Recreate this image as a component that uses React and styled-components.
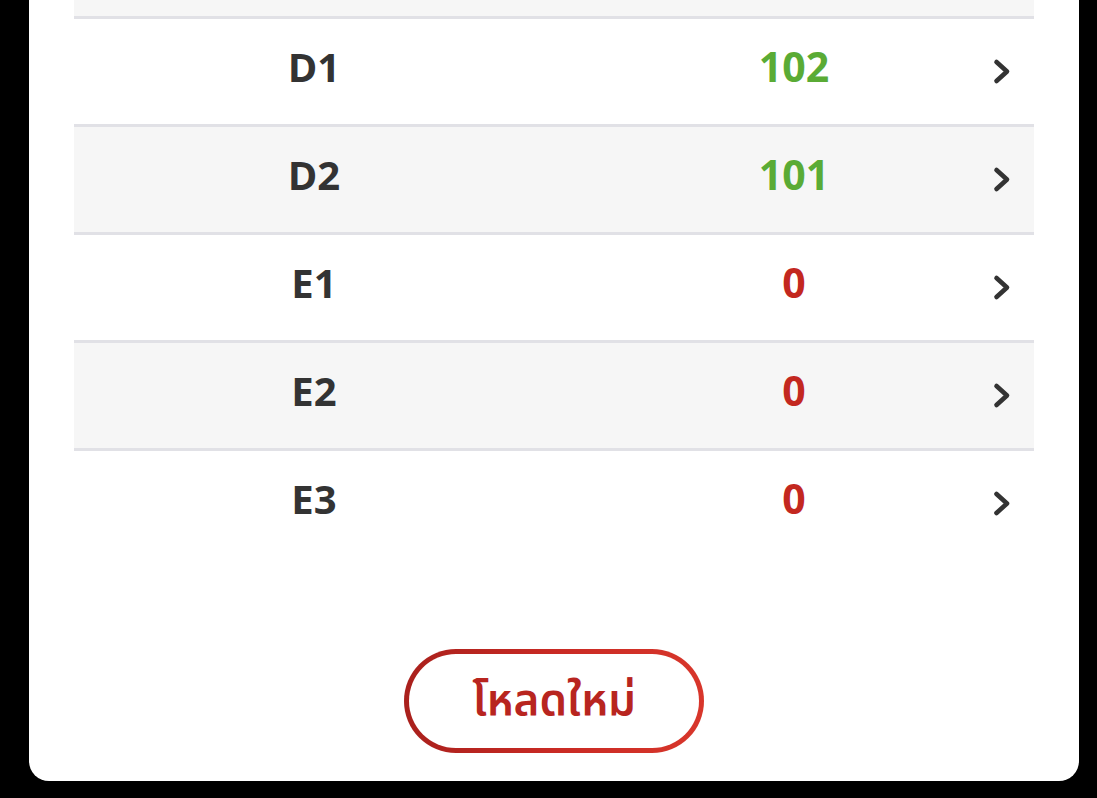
import React from "react";
import styled, { createGlobalStyle } from "styled-components";

const GlobalStyle = createGlobalStyle`
  html, body {
    margin: 0;
    padding: 0;
    background: #000;
  }
  body {
    font-family: "Open Sans", "Noto Sans", sans-serif;
  }
`;

const rows = [
  { zone: "D1", count: 102 },
  { zone: "D2", count: 101 },
  { zone: "E1", count: 0 },
  { zone: "E2", count: 0 },
  { zone: "E3", count: 0 },
];

const Screen = styled.div`
  height: 798px;
  padding: 0 18px 17px 29px;
  box-sizing: border-box;
  overflow: hidden;
`;

const Card = styled.div`
  background: #fff;
  border-radius: 0 0 20px 20px;
  padding: 0 45px 28px;
  display: flex;
  flex-direction: column;
  height: 100%;
  box-sizing: border-box;
`;

const Table = styled.div`
  display: flex;
  flex-direction: column;
`;

const Row = styled.div`
  display: grid;
  grid-template-columns: 1fr 1fr;
  align-items: center;
  height: ${(p) => p.$h || 105}px;
  background: ${(p) => (p.$striped ? "#f6f6f6" : "#fff")};
  border-bottom: ${(p) => (p.$last ? "none" : "3px solid #e1e1e6")};
`;

const Zone = styled.div`
  text-align: center;
  font-size: 40px;
  font-weight: 700;
  color: #333;
  margin-bottom: 11px;
`;

const CountCell = styled.div`
  display: grid;
  grid-template-columns: 1fr auto 1fr;
  align-items: center;
`;

const Count = styled.div`
  grid-column: 2;
  font-size: 41px;
  font-weight: 700;
  color: ${(p) => (p.$ok ? "#5aab35" : "#c3281f")};
  margin-bottom: 11px;
`;

const Chevron = styled.svg`
  grid-column: 3;
  justify-self: end;
  margin-right: 23px;
`;

const Footer = styled.div`
  margin-top: auto;
  display: flex;
  justify-content: center;
`;

/* red pill with a darker-left gradient ring */
const ReloadButton = styled.button`
  width: 300px;
  height: 104px;
  border-radius: 52px;
  border: 5px solid transparent;
  background:
    linear-gradient(#fff, #fff) padding-box,
    linear-gradient(90deg, #a9201c, #c92a24 50%, #d8362b) border-box;
  color: #b8251f;
  font-family: "Noto Sans Thai", "Noto Sans", sans-serif;
  font-size: 44px;
  font-weight: 600;
  cursor: pointer;
`;

const ChevronIcon = () => (
  <Chevron width="18" height="27" viewBox="0 0 18 27">
    <path
      d="M3.5 4 L14 13.5 L3.5 23"
      fill="none"
      stroke="#333"
      strokeWidth="4.6"
      strokeLinecap="round"
      strokeLinejoin="round"
    />
  </Chevron>
);

export default function App() {
  return (
    <>
      <GlobalStyle />
      <Screen>
        <Card>
          <Table>
            <Row $striped $h={16} />
            {rows.map((r, i) => (
              <Row key={r.zone} $striped={i % 2 === 1} $last={i === rows.length - 1}>
                <Zone>{r.zone}</Zone>
                <CountCell>
                  <Count $ok={r.count > 0}>{r.count}</Count>
                  <ChevronIcon />
                </CountCell>
              </Row>
            ))}
          </Table>
          <Footer>
            <ReloadButton type="button">โหลดใหม่</ReloadButton>
          </Footer>
        </Card>
      </Screen>
    </>
  );
}
